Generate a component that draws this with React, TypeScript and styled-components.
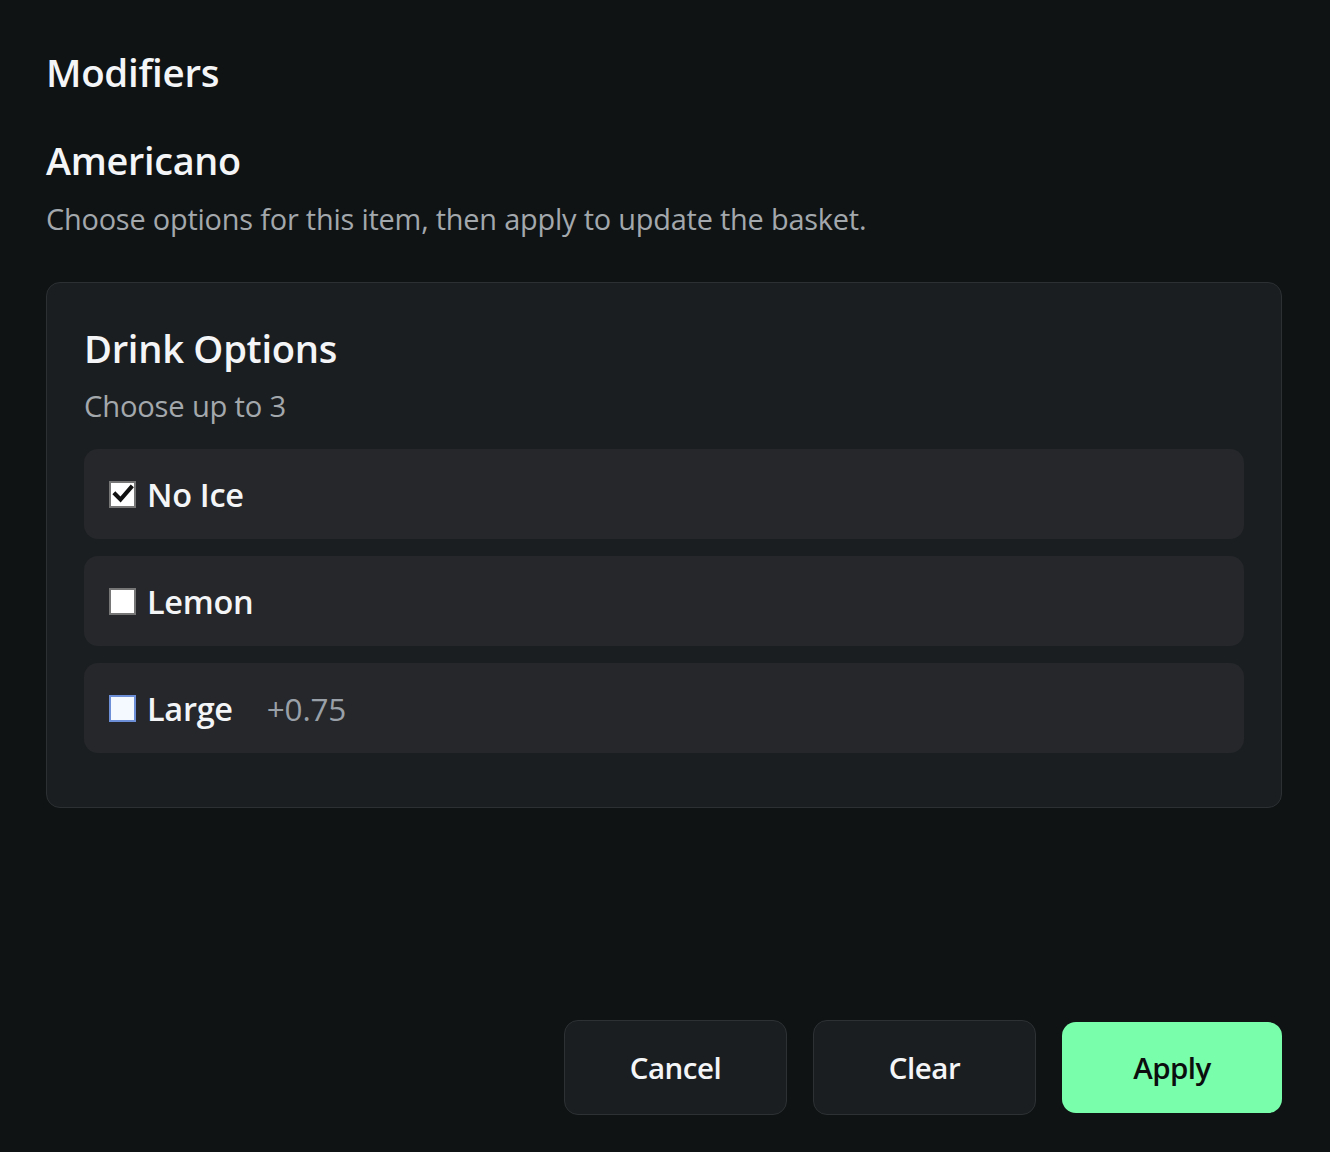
import React, { useState } from "react";
import styled, { createGlobalStyle } from "styled-components";

const GlobalStyle = createGlobalStyle`
  html, body {
    margin: 0;
    padding: 0;
    background: #0f1314;
  }
  body {
    font-family: "Open Sans", "Noto Sans", "Liberation Sans", sans-serif;
    color: #f3f5f7;
  }
  * {
    box-sizing: border-box;
  }
`;

const Sheet = styled.div`
  min-height: 100vh;
  display: flex;
  flex-direction: column;
  padding: 46px 48px 37px 46px;
`;

const Title = styled.h1`
  margin: 0;
  font-size: 38.5px;
  font-weight: 600;
  line-height: 52px;
  letter-spacing: -0.3px;
`;

const ItemName = styled.h2`
  margin: 37px 0 0;
  font-size: 37.8px;
  font-weight: 600;
  line-height: 52px;
  letter-spacing: -0.3px;
`;

const Hint = styled.p`
  margin: 12px 0 0;
  font-size: 28.9px;
  line-height: 40px;
  color: #a3a8ad;
  letter-spacing: -0.2px;
`;

const Group = styled.section`
  margin-top: 43px;
  background: #1b1e20;
  border: 1.5px solid #2d3032;
  border-radius: 14px;
  padding: 39px 37px 54px 37px;
`;

const GroupTitle = styled.h3`
  margin: 0;
  font-size: 38.2px;
  font-weight: 600;
  line-height: 52px;
  letter-spacing: -0.3px;
`;

const GroupHint = styled.div`
  margin-top: 12px;
  font-size: 29.2px;
  line-height: 40px;
  color: #a3a8ad;
  letter-spacing: -0.2px;
`;

const OptionList = styled.div`
  margin-top: 23px;
  display: flex;
  flex-direction: column;
  gap: 17px;
`;

const OptionRow = styled.label`
  height: 90px;
  display: flex;
  align-items: center;
  padding: 0 25px;
  background: #25272a;
  border-radius: 14px;
  cursor: pointer;
`;

const Box = styled.span<{ $focus?: boolean }>`
  width: 27px;
  height: 27px;
  flex: none;
  background: ${(p) => (p.$focus ? "#f4f8ff" : "#ffffff")};
  border: 2px solid ${(p) => (p.$focus ? "#6c8fd8" : "#767676")};
  display: flex;
  align-items: center;
  justify-content: center;
  margin-right: 11px;
`;

const OptionLabel = styled.span`
  font-size: 32.5px;
  font-weight: 600;
  letter-spacing: -0.3px;
`;

const Price = styled.span`
  margin-left: 34px;
  font-size: 31.5px;
  color: #9aa0a8;
  letter-spacing: -0.2px;
`;

const Footer = styled.div`
  margin-top: auto;
  display: flex;
  justify-content: flex-end;
  align-items: center;
  gap: 26px;
`;

const Button = styled.button<{ $primary?: boolean }>`
  width: ${(p) => (p.$primary ? "220px" : "223px")};
  height: ${(p) => (p.$primary ? "91px" : "95px")};
  border-radius: 14px;
  border: ${(p) => (p.$primary ? "none" : "1.5px solid #2e3133")};
  background: ${(p) => (p.$primary ? "#79ffab" : "#1b1e20")};
  color: ${(p) => (p.$primary ? "#0b0d0e" : "#f3f5f7")};
  font-family: inherit;
  font-size: 29.5px;
  font-weight: 600;
  letter-spacing: -0.5px;
  cursor: pointer;
`;

const Check = () => (
  <svg width="22" height="22" viewBox="0 0 16 16">
    <path
      d="M2.4 8.2 L6.2 12 L13.8 3.2"
      fill="none"
      stroke="#111"
      strokeWidth="3"
      strokeLinecap="square"
    />
  </svg>
);

const options = [
  { id: "no-ice", label: "No Ice" },
  { id: "lemon", label: "Lemon" },
  { id: "large", label: "Large", price: "+0.75" },
];

export default function App() {
  const [picked, setPicked] = useState<string[]>(["no-ice"]);

  const toggle = (id: string) =>
    setPicked((cur) =>
      cur.includes(id) ? cur.filter((x) => x !== id) : [...cur, id]
    );

  return (
    <>
      <GlobalStyle />
      <Sheet>
        <Title>Modifiers</Title>
        <ItemName>Americano</ItemName>
        <Hint>Choose options for this item, then apply to update the basket.</Hint>

        <Group>
          <GroupTitle>Drink Options</GroupTitle>
          <GroupHint>Choose up to 3</GroupHint>
          <OptionList>
            {options.map((o) => {
              const on = picked.includes(o.id);
              return (
                <OptionRow key={o.id} onClick={() => toggle(o.id)}>
                  <Box $focus={o.id === "large"}>{on && <Check />}</Box>
                  <OptionLabel>{o.label}</OptionLabel>
                  {o.price && <Price>{o.price}</Price>}
                </OptionRow>
              );
            })}
          </OptionList>
        </Group>

        <Footer>
          <Button>Cancel</Button>
          <Button onClick={() => setPicked([])}>Clear</Button>
          <Button $primary>Apply</Button>
        </Footer>
      </Sheet>
    </>
  );
}
